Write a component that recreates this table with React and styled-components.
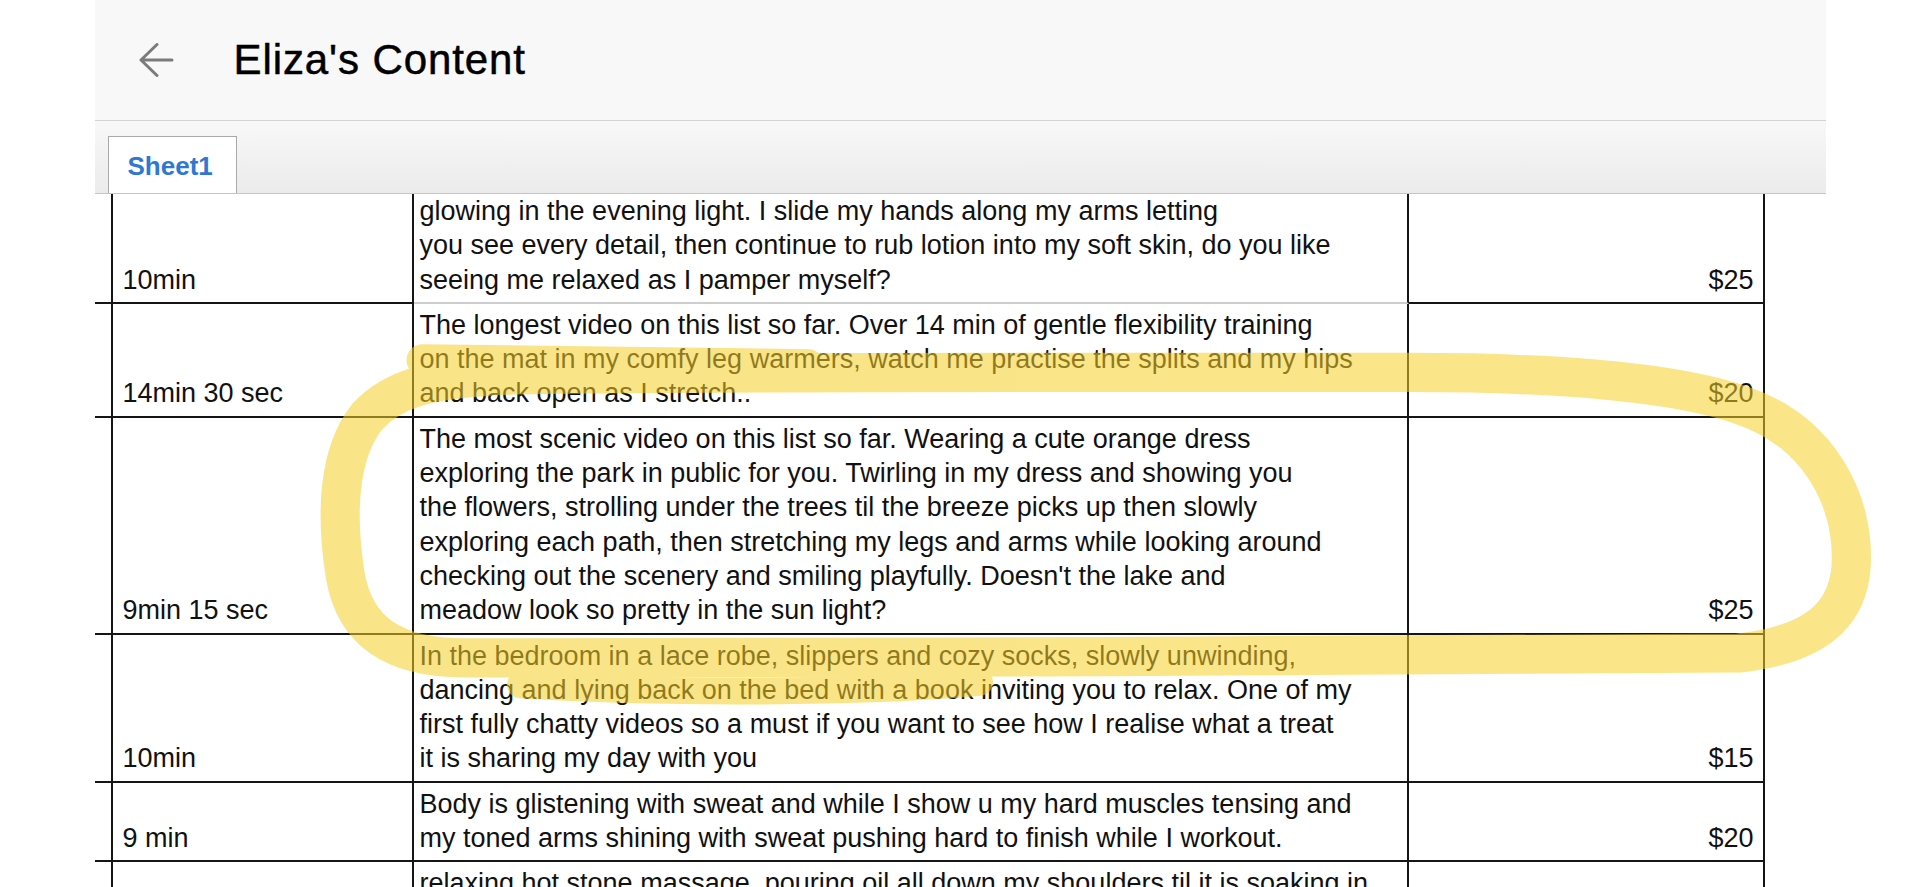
import React from "react";
import styled, { createGlobalStyle } from "styled-components";

const GlobalStyle = createGlobalStyle`
  html, body {
    margin: 0;
    padding: 0;
    background: #ffffff;
    overflow: hidden;
  }
  body {
    font-family: "Liberation Sans", Arial, sans-serif;
    color: #111111;
  }
`;

const Viewport = styled.div`
  position: relative;
  width: 1920px;
  height: 887px;
  overflow: hidden;
  background: #ffffff;
`;

const Frame = styled.div`
  width: 1731px;
  margin: 0 auto;
`;

const Header = styled.header`
  box-sizing: border-box;
  height: 121px;
  background: #f8f8f8;
  border-bottom: 1px solid #d3d3d3;
  display: flex;
  align-items: center;
  padding-left: 43px;
`;

const BackButton = styled.button`
  border: none;
  background: none;
  padding: 0;
  width: 36px;
  height: 34px;
  margin-right: 60px;
  color: #7b7b7b;
  display: flex;
  align-items: center;
  justify-content: center;
  cursor: pointer;
`;

const Title = styled.h1`
  margin: 0;
  font-family: "Liberation Sans", Arial, sans-serif;
  font-size: 42px;
  font-weight: 400;
  line-height: 1;
  letter-spacing: 0.9px;
  color: #000;
  -webkit-text-stroke: 0.5px #000;
`;

const TabBar = styled.nav`
  box-sizing: border-box;
  height: 73px;
  background: linear-gradient(#f8f8f8, #ebebeb);
  border-bottom: 1px solid #c6c6c6;
  display: flex;
  align-items: flex-end;
  padding-left: 13px;
`;

const Tab = styled.div`
  box-sizing: border-box;
  width: 129px;
  height: 57px;
  background: #ffffff;
  border: 1px solid #a9a9a9;
  border-bottom: none;
  display: flex;
  align-items: center;
  padding-left: 19px;
  padding-top: 2px;
  font-size: 26px;
  font-weight: 700;
  color: ${(p) => (p.$active ? "#2f78d2" : "#555")};
`;

const Sheet = styled.div`
  display: flex;
  flex-direction: column;
`;

const Row = styled.div`
  display: grid;
  grid-template-columns: 16px 303px 995px 356px;
`;

const Cell = styled.div`
  box-sizing: border-box;
  display: flex;
  font-size: 27px;
  line-height: 34.3px;
  color: #111;
  padding-top: ${(p) => (p.$clipped ? "0" : "4px")};
  padding-bottom: 5px;
  border-bottom: 2px solid ${(p) => (p.$light ? "#cdcdcd" : "#151515")};
`;

const Stub = styled(Cell)`
  border-bottom-color: #151515;
`;

const DurationCell = styled(Cell)`
  align-items: flex-end;
  border-left: 2px solid #151515;
  border-right: 2px solid #151515;
  border-bottom-color: #151515;
  padding-left: 10px;
`;

const DescCell = styled(Cell)`
  flex-direction: column;
  justify-content: flex-end;
  border-right: 2px solid #151515;
  padding-left: 6px;
  overflow: hidden;
`;

const Line = styled.span`
  display: block;
  white-space: nowrap;
`;

const PriceCell = styled(Cell)`
  align-items: flex-end;
  justify-content: flex-end;
  border-right: 2px solid #151515;
  border-bottom-color: #151515;
  padding-right: 9px;
`;

const Highlight = styled.svg`
  position: absolute;
  left: 0;
  top: 0;
  width: 1920px;
  height: 887px;
  pointer-events: none;
`;

const rows = [
  {
    duration: "10min",
    price: "$25",
    clipped: true,
    light: true,
    lines: [
      "glowing in the evening light. I slide my hands along my arms letting",
      "you see every detail, then continue to rub lotion into my soft skin, do you like",
      "seeing me relaxed as I pamper myself?",
    ],
  },
  {
    duration: "14min 30 sec",
    price: "$20",
    lines: [
      "The longest video on this list so far. Over 14 min of gentle flexibility training",
      "on the mat in my comfy leg warmers, watch me practise the splits and my hips",
      "and back open as I stretch..",
    ],
  },
  {
    duration: "9min 15 sec",
    price: "$25",
    lines: [
      "The most scenic video on this list so far. Wearing a cute orange dress",
      "exploring the park in public for you. Twirling in my dress and showing you",
      "the flowers, strolling under the trees til the breeze picks up then slowly",
      "exploring each path, then stretching my legs and arms while looking around",
      "checking out the scenery and smiling playfully. Doesn't the lake and",
      "meadow look so pretty in the sun light?",
    ],
  },
  {
    duration: "10min",
    price: "$15",
    lines: [
      "In the bedroom in a lace robe, slippers and cozy socks, slowly unwinding,",
      "dancing and lying back on the bed with a book inviting you to relax. One of my",
      "first fully chatty videos so a must if you want to see how I realise what a treat",
      "it is sharing my day with you",
    ],
  },
  {
    duration: "9 min",
    price: "$20",
    lines: [
      "Body is glistening with sweat and while I show u my hard muscles tensing and",
      "my toned arms shining with sweat pushing hard to finish while I workout.",
    ],
  },
  {
    duration: "",
    price: "",
    lines: [
      "relaxing hot stone massage, pouring oil all down my shoulders til it is soaking in",
      "and I can finally unwind after a long day",
    ],
  },
];

function BackArrow() {
  return (
    <svg width="36" height="34" viewBox="0 0 36 34" fill="none">
      <path
        d="M34 17H3M19 1.5L3 17l16 15.5"
        stroke="currentColor"
        strokeWidth="3"
        strokeLinecap="round"
        strokeLinejoin="round"
      />
    </svg>
  );
}

function Annotation() {
  return (
    <Highlight viewBox="0 0 1568 724" preserveAspectRatio="none">
      <g opacity="0.55" stroke="#f7cf28" fill="none" strokeLinecap="round" strokeLinejoin="round">
        <path
          strokeWidth="32"
          d="M 420 306 C 520 304, 700 304, 900 304 L 1150 304 C 1260 304, 1360 310, 1420 330 C 1488 352, 1512 410, 1512 455 C 1512 500, 1485 526, 1420 533 L 900 536 L 380 537 C 320 537, 290 515, 282 470 C 274 420, 276 370, 300 340 C 320 318, 350 308, 420 306 Z"
        />
        <path strokeWidth="26" d="M 345 294 L 660 298" />
        <path strokeWidth="22" d="M 425 559 C 540 566, 700 566, 800 557" />
      </g>
    </Highlight>
  );
}

export default function App() {
  return (
    <Viewport>
      <GlobalStyle />
      <Frame>
        <Header>
          <BackButton aria-label="Back">
            <BackArrow />
          </BackButton>
          <Title>Eliza's Content</Title>
        </Header>
        <TabBar>
          <Tab $active>Sheet1</Tab>
        </TabBar>
        <Sheet>
          {rows.map((r, i) => (
            <Row key={i}>
              <Stub $clipped={r.clipped} />
              <DurationCell $clipped={r.clipped}>{r.duration}</DurationCell>
              <DescCell $clipped={r.clipped} $light={r.light}>
                {r.lines.map((l, j) => (
                  <Line key={j}>{l}</Line>
                ))}
              </DescCell>
              <PriceCell $clipped={r.clipped}>{r.price}</PriceCell>
            </Row>
          ))}
        </Sheet>
      </Frame>
      <Annotation />
    </Viewport>
  );
}
